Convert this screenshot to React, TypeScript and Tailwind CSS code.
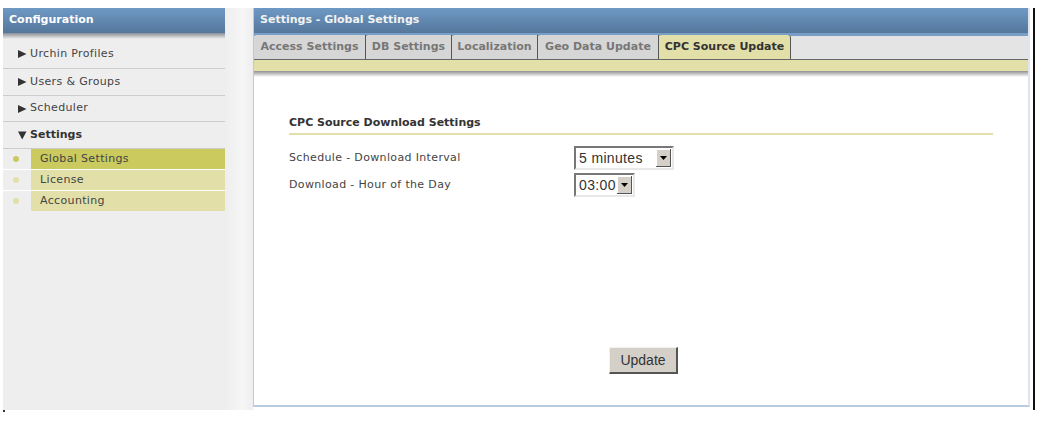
const navItems = [
  { label: 'Urchin Profiles', h: 'h-[30px]', pt: 'pt-[1px]' },
  { label: 'Users & Groups', h: 'h-[27px]', pt: '' },
  { label: 'Scheduler', h: 'h-[26px]', pt: '' },
];

const subItems = [
  { label: 'Global Settings', active: true },
  { label: 'License', active: false },
  { label: 'Accounting', active: false },
];

const tabs = ['Access Settings', 'DB Settings', 'Localization', 'Geo Data Update'];

const tabWidths = ['w-[112px]', 'w-[86px]', 'w-[86px]', 'w-[121px]'];

const Arrow = ({ down }: { down?: boolean }) => (
  <svg width="10" height="10" viewBox="0 0 10 10" className="mr-[3px] shrink-0">
    <path d={down ? 'M1 1.5H9.5L5.2 9.5Z' : 'M1 1L9.5 5L1 9Z'} fill="#333333" />
  </svg>
);

const SelectBox = ({ value, width }: { value: string; width: string }) => (
  <div
    className={`${width} h-[24px] flex items-center justify-between bg-white border-2 border-t-[#777777] border-l-[#777777] border-r-[#e8e8e8] border-b-[#e8e8e8] pl-[3px] pr-[1px] text-[14px] text-[#333333] font-['Liberation_Sans',sans-serif]`}
  >
    <span>{value}</span>
    <span className="w-[15px] h-[18px] flex items-center justify-center bg-[#d4d0c8] border-r border-b border-[#555555] shadow-[inset_1px_1px_0_#ffffff]">
      <svg width="7" height="4" viewBox="0 0 7 4">
        <path d="M0 0H7L3.5 4Z" fill="#000000" />
      </svg>
    </span>
  </div>
);

export default function App() {
  return (
    <div className="relative w-[1044px] h-[421px] bg-white overflow-hidden font-['DejaVu_Sans',Verdana,sans-serif] text-[11px]">
      <div className="ml-[3px] pt-[8px] flex w-[1030px] h-[410px]">
        {/* Sidebar */}
        <aside className="w-[250px] h-[402px] flex flex-col bg-[linear-gradient(to_right,#eeeeee_222px,#f6f6f6_240px,#eeeeee_250px)]">
          <div className="w-[222px]">
            <div className="h-[25px] pl-[6px] flex items-center font-bold text-white text-[11px] bg-[linear-gradient(to_bottom,#6e99c5,#55779b)]">
              Configuration
            </div>
            <div className="h-[6px] bg-[linear-gradient(to_bottom,#8a8f94,#eeeeee)]" />
            {navItems.map((item) => (
              <div
                key={item.label}
                className={`${item.h} ${item.pt} pl-[14px] flex items-center border-b border-[#cccccc] tracking-[0.35px] text-[#444444]`}
              >
                <Arrow />
                {item.label}
              </div>
            ))}
            <div className="h-[27px] pl-[14px] flex items-center border-b border-[#cccccc] font-bold text-[#333333]">
              <Arrow down />
              Settings
            </div>
            <div className="flex flex-col gap-[1px] bg-white">
              {subItems.map((sub) => (
                <div key={sub.label} className="h-[20px] flex bg-[#eeeeee]">
                  <div className="w-[28px] flex items-center justify-center pr-[3px]">
                    <span
                      className={`w-[6px] h-[6px] rounded-full ${sub.active ? 'bg-[#c9c95f]' : 'bg-[#e2e0a8]'}`}
                    />
                  </div>
                  <div
                    className={`flex-1 pl-[9px] flex items-center tracking-[0.35px] text-[#444444] ${sub.active ? 'bg-[#caca5f]' : 'bg-[#e2e0a8]'}`}
                  >
                    {sub.label}
                  </div>
                </div>
              ))}
            </div>
          </div>
        </aside>

        {/* Main panel */}
        <main className="w-[777px] h-[399px] flex flex-col bg-white border-l border-b-2 border-r-2 border-[#b9cbe0] border-r-[#dfe5ee]">
          <div className="h-[25px] pl-[6px] flex items-center font-bold text-[#f2f2f2] bg-[linear-gradient(to_bottom,#6e99c5,#55779b)]">
            Settings - Global Settings
          </div>
          <div className="h-[3px] bg-[#7a9fc6]" />
          <div className="h-[24px] flex items-end bg-[#e4e4e4] border-b border-[#666666]">
            {tabs.map((tab, i) => (
              <div
                key={tab}
                className={`${tabWidths[i]} h-[24px] flex items-center justify-center font-bold text-[#777777] bg-[#d6d6d6] border-r border-[#555555] rounded-tl-[3px]`}
              >
                {tab}
              </div>
            ))}
            <div className="w-[132px] h-[24px] flex items-center justify-center font-bold text-[#333333] bg-[#e2e0a8] border-r border-[#555555] rounded-t-[3px]">
              CPC Source Update
            </div>
          </div>
          <div className="h-[11px] bg-[#e2e0a8]" />
          <div className="h-[6px] bg-[linear-gradient(to_bottom,#8f9092,#ffffff)]" />

          <div className="flex-1 flex flex-col pl-[35px] pr-[35px] pt-[39px]">
            <div className="h-[17px] font-bold text-[#333333] border-b-2 border-[#e2e0a8] box-content leading-[14px]">
              CPC Source Download Settings
            </div>
            <div className="mt-[11px] flex flex-col gap-[3px] tracking-[0.35px] text-[#444444]">
              <div className="flex items-center h-[24px]">
                <span className="w-[285px]">Schedule - Download Interval</span>
                <SelectBox value="5 minutes" width="w-[100px]" />
              </div>
              <div className="flex items-center h-[24px]">
                <span className="w-[285px]">Download - Hour of the Day</span>
                <SelectBox value="03:00" width="w-[61px]" />
              </div>
            </div>
            <div className="mt-[150px] ml-[320px]">
              <button className="w-[69px] h-[27px] bg-[#d4d0c8] border border-t-[#f2f2f2] border-l-[#f2f2f2] border-r-2 border-b-2 border-r-[#555555] border-b-[#555555] text-[14px] text-[#333333] font-['Liberation_Sans',sans-serif]">
                Update
              </button>
            </div>
          </div>
        </main>
      </div>

      {/* Crop edge of the original capture */}
      <div className="absolute left-[1033px] top-[8px] w-[2px] h-[402px] bg-[#111111]" />
      <div className="absolute left-[3px] top-[410px] w-[2px] h-[2px] bg-[#333333]" />
    </div>
  );
}
